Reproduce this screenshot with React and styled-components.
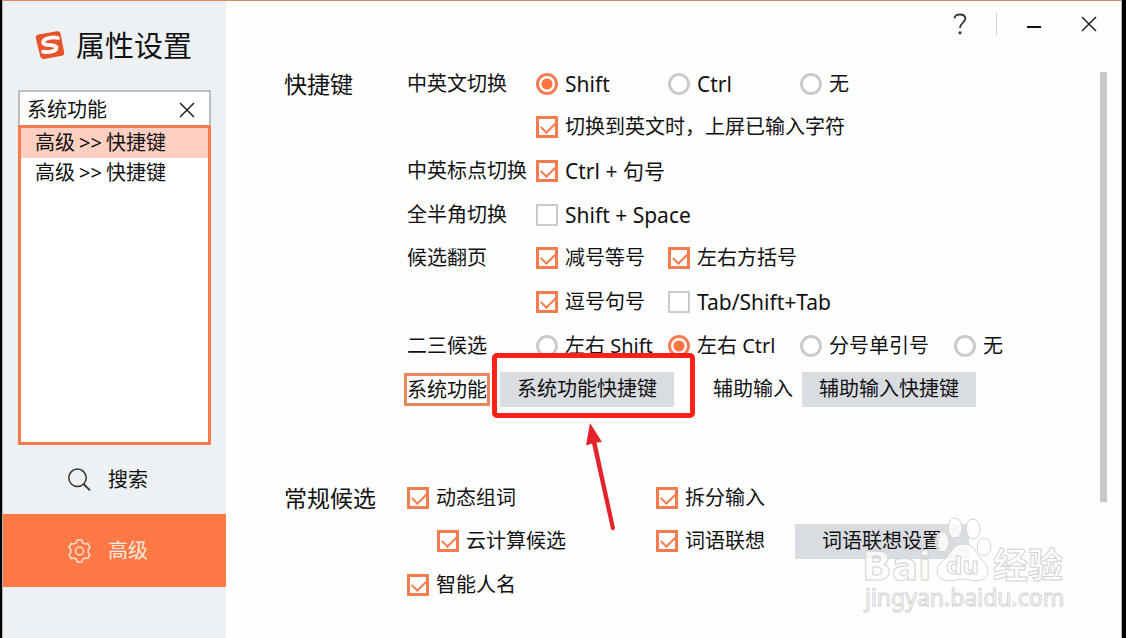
import React, { useState } from 'react';
import styled, { createGlobalStyle, css } from 'styled-components';

const orange = '#f67c4f';
const grey = '#c9cbcc';

const GlobalStyle = createGlobalStyle`
  * {
    box-sizing: border-box;
  }

  body {
    margin: 0;
    background: #000;
    color: #111;
    font-family: "Noto Sans", "Noto Sans CJK SC", sans-serif;
    font-size: 20px;
    line-height: 30px;
  }

  button,
  input {
    font: inherit;
    color: inherit;
  }
`;

const Window = styled.div`
  position: relative;
  display: flex;
  min-height: 100vh;
  margin: 0 4px 0 2px;
  border: 1px solid #b3b3b3;
  border-top: 1px solid #e08a68;
  border-bottom: 0;
  background: #fefefe;
  overflow: hidden;
`;

const Sidebar = styled.aside`
  flex: none;
  display: flex;
  flex-direction: column;
  width: 223px;
  background: #edf1f4;
`;

const Brand = styled.header`
  display: flex;
  align-items: center;
  gap: 10px;
  height: 89px;
  padding-left: 32px;
`;

const BrandTitle = styled.h1`
  margin: 0;
  font-size: 29px;
  font-weight: 400;
  line-height: 40px;
`;

const SearchBox = styled.div`
  display: flex;
  align-items: center;
  height: 35px;
  margin: 0 15px;
  padding: 2px 14px 0 7px;
  border: 2px solid #b9bfc3;
  border-bottom: 0;
  background: #fff;
`;

const SearchInput = styled.input`
  flex: 1;
  width: 100%;
  min-width: 0;
  padding: 0;
  border: 0;
  outline: 0;
  background: transparent;
`;

const IconButton = styled.button`
  display: flex;
  padding: 0;
  border: 0;
  background: none;
  cursor: pointer;
`;

const ResultList = styled.ul`
  height: 320px;
  margin: 0 15px;
  padding: 0;
  border: 3px solid ${orange};
  background: #fff;
  list-style: none;
`;

const Result = styled.li`
  padding-left: 14px;
  background: ${props => (props.$active ? '#ffd0c1' : 'transparent')};
`;

const Arrows = styled.span`
  padding: 0 4px;
`;

const Nav = styled.nav`
  display: flex;
  flex-direction: column;
`;

const NavItem = styled.a`
  display: flex;
  align-items: center;
  gap: 17px;
  height: ${props => (props.$active ? '73px' : '69px')};
  padding-left: 65px;
  color: ${props => (props.$active ? '#ffe9df' : '#111')};
  background: ${props => (props.$active ? '#ff7845' : 'transparent')};
  text-decoration: none;
`;

const Main = styled.main`
  flex: 1;
  display: flex;
  flex-direction: column;
  min-width: 0;
`;

const TitleBar = styled.div`
  display: flex;
  align-items: center;
  justify-content: flex-end;
  height: 45px;
  padding-right: 24px;
`;

const Divider = styled.span`
  width: 1px;
  height: 22px;
  margin: 0 29px;
  background: #ccc;
`;

const WindowButtons = styled.div`
  display: flex;
  gap: 39px;
`;

const Body = styled.div`
  flex: 1;
  display: flex;
  padding-top: 16px;
`;

const Sections = styled.div`
  flex: 1;
  display: flex;
  flex-direction: column;
  gap: 65px;
  min-width: 0;
  padding-left: 58px;
  white-space: nowrap;
`;

const ScrollTrack = styled.div`
  flex: none;
  width: 21px;
  padding-top: 10px;
`;

const ScrollThumb = styled.div`
  width: 7px;
  height: 76%;
  background: #c8c8c8;
`;

const Section = styled.section`
  display: grid;
  grid-template-columns: 123px 1fr;
`;

const SectionTitle = styled.h2`
  margin: 0;
  font-size: 23px;
  font-weight: 400;
  line-height: 44px;
`;

const Rows = styled.div`
  display: grid;
  grid-auto-rows: 1fr;
  min-height: ${props => props.$height};
`;

const Row = styled.div`
  display: grid;
  grid-template-columns: 129px 1fr;
  align-items: center;
`;

const RowLabel = styled.span`
  grid-column: 1;
`;

const Options = styled.div`
  grid-column: 2;
  display: grid;
  grid-template-columns: 132px 132px 154px auto;
`;

const Candidates = styled.div`
  display: grid;
  grid-template-columns: 249px 139px auto;
  align-items: center;
`;

const OptionLabel = styled.label`
  display: flex;
  align-items: center;
  gap: 7px;
  cursor: pointer;
  ${props => props.$wide && css`grid-column: 1 / -1;`}
  ${props => props.$indent && css`padding-left: 30px;`}
  ${props => props.$latin && css`font-size: 21px;`}
`;

const Check = styled.input`
  position: relative;
  appearance: none;
  flex: none;
  width: 22px;
  height: 22px;
  margin: 0;
  border: 2px solid ${grey};
  background: #fff;

  &:checked {
    border: 3px solid ${orange};
  }

  &:checked::after {
    content: '';
    position: absolute;
    left: 2px;
    top: 2px;
    width: 13px;
    height: 7px;
    border: solid ${orange};
    border-width: 0 0 2px 2px;
    transform: rotate(-45deg);
  }
`;

const Radio = styled.input`
  appearance: none;
  flex: none;
  width: 22px;
  height: 22px;
  margin: 0;
  border: 3px solid ${grey};
  border-radius: 50%;
  background: #fff;

  &:checked {
    border-color: ${orange};
    background: radial-gradient(circle, #ff7440 5px, #fff 6px);
  }
`;

const ShortcutRow = styled.div`
  display: flex;
  align-items: center;
`;

const FoundLabel = styled.span`
  margin: 0 10px 0 -3px;
  border: 3px solid #e98660;
  line-height: 27px;
`;

const PlainLabel = styled.span`
  margin: 0 9px 0 39px;
`;

const SettingButton = styled.button`
  width: 174px;
  height: 35px;
  padding: 0;
  border: 0;
  background: #d9dce1;
  cursor: pointer;
`;

const Marked = styled.div`
  position: relative;
  display: flex;
`;

const Frame = styled.span`
  position: absolute;
  inset: -19px -21px -11px -8px;
  border: 5px solid #ff2017;
  border-radius: 5px;
  pointer-events: none;
`;

const Pointer = styled.svg`
  position: absolute;
  left: 84px;
  top: 50px;
  pointer-events: none;
`;

const Watermark = styled.svg`
  position: absolute;
  right: 50px;
  bottom: 20px;
  pointer-events: none;
`;

const Logo = () => (
  <svg width="31" height="31" viewBox="0 0 31 31" aria-hidden="true">
    <path
      d="M3.500 4.500 22 1.300q3-.4 3.600 2.400l3.500 18.500q.4 3-2.400 3.600L9.300 29q-3.200.5-4-2.400L.8 8.200q-.5-3 2.700-3.700Z"
      fill="#e8532c"
    />
    <path
      d="M23 8C18 6.600 8 8 8.200 12.400c.2 4.200 13.300 1.200 13.200 5.500-.1 4-9 4.800-13.300 3.700"
      fill="none"
      stroke="#fff"
      strokeWidth="3.800"
      strokeLinecap="round"
    />
  </svg>
);

const CrossIcon = () => (
  <svg width="16" height="16" viewBox="0 0 16 16" aria-hidden="true">
    <path d="M1 1 15 15M15 1 1 15" stroke="#222" strokeWidth="1.500" />
  </svg>
);

const MinusIcon = () => (
  <svg width="16" height="16" viewBox="0 0 16 16" aria-hidden="true">
    <path d="M1 11H15" stroke="#111" strokeWidth="2" />
  </svg>
);

const HelpIcon = () => (
  <svg width="14" height="22" viewBox="0 0 14 22" aria-hidden="true">
    <path
      d="M1.500 5.500C1.500 3 3.700 1.500 6.800 1.500S12.300 3 12.300 5.500C12.300 9.500 7 9.800 7 15"
      fill="none"
      stroke="#333"
      strokeWidth="1.800"
    />
    <path d="M5.600 18.500H8.400V21.200H5.600Z" fill="#333" />
  </svg>
);

const SearchIcon = () => (
  <svg width="23" height="23" viewBox="0 0 23 23" aria-hidden="true">
    <circle cx="9.500" cy="9.800" r="8.700" fill="none" stroke="#333" strokeWidth="1.500" />
    <path d="M15.600 16 22 22.300" stroke="#333" strokeWidth="1.800" />
  </svg>
);

const GearIcon = () => (
  <svg width="23" height="24" viewBox="0 0 23 24" aria-hidden="true">
    <g fill="none" stroke="#ffe0d2" strokeWidth="1.500" strokeLinejoin="round">
      <path d="M9.300 1H13.700L14.500 3.500 17.300 5.100 19.800 4.500 22 8.300 20.300 10.200V13.800L22 15.700 19.800 19.500 17.300 18.900 14.500 20.500 13.700 23H9.300L8.500 20.500 5.700 18.900 3.200 19.500 1 15.700 2.700 13.800V10.200L1 8.300 3.200 4.500 5.700 5.100 8.500 3.500Z" />
      <circle cx="11.500" cy="12" r="4" />
    </g>
  </svg>
);

const Option = ({ type, label, checked, name, wide, indent, latin }) => (
  <OptionLabel $wide={wide} $indent={indent} $latin={latin}>
    {type === 'radio' ? (
      <Radio type="radio" name={name} defaultChecked={checked} />
    ) : (
      <Check type="checkbox" defaultChecked={checked} />
    )}
    {label}
  </OptionLabel>
);

const shortcutRows = [
  {
    label: '中英文切换',
    name: 'language',
    type: 'radio',
    options: [
      { label: 'Shift', checked: true, latin: true },
      { label: 'Ctrl', latin: true },
      { label: '无' },
    ],
  },
  { options: [{ label: '切换到英文时，上屏已输入字符', checked: true, wide: true }] },
  { label: '中英标点切换', options: [{ label: 'Ctrl + 句号', checked: true, wide: true, latin: true }] },
  { label: '全半角切换', options: [{ label: 'Shift + Space', wide: true, latin: true }] },
  {
    label: '候选翻页',
    options: [{ label: '减号等号', checked: true }, { label: '左右方括号', checked: true }],
  },
  { options: [{ label: '逗号句号', checked: true }, { label: 'Tab/Shift+Tab', latin: true }] },
  {
    label: '二三候选',
    name: 'candidate',
    type: 'radio',
    options: [
      { label: '左右 Shift' },
      { label: '左右 Ctrl', checked: true },
      { label: '分号单引号' },
      { label: '无' },
    ],
  },
];

const App = () => {
  const [query, setQuery] = useState('系统功能');

  return (
    <>
      <GlobalStyle />
      <Window>
        <Sidebar>
          <Brand>
            <Logo />
            <BrandTitle>属性设置</BrandTitle>
          </Brand>
          <SearchBox>
            <SearchInput
              type="text"
              aria-label="搜索"
              value={query}
              onChange={e => setQuery(e.target.value)}
            />
            <IconButton type="button" aria-label="清除" onClick={() => setQuery('')}>
              <CrossIcon />
            </IconButton>
          </SearchBox>
          <ResultList>
            <Result $active>
              高级<Arrows>&gt;&gt;</Arrows>快捷键
            </Result>
            <Result>
              高级<Arrows>&gt;&gt;</Arrows>快捷键
            </Result>
          </ResultList>
          <Nav>
            <NavItem href="#search">
              <SearchIcon />
              搜索
            </NavItem>
            <NavItem href="#advanced" $active>
              <GearIcon />
              高级
            </NavItem>
          </Nav>
        </Sidebar>

        <Main>
          <TitleBar>
            <IconButton type="button" aria-label="帮助">
              <HelpIcon />
            </IconButton>
            <Divider />
            <WindowButtons>
              <IconButton type="button" aria-label="最小化">
                <MinusIcon />
              </IconButton>
              <IconButton type="button" aria-label="关闭">
                <CrossIcon />
              </IconButton>
            </WindowButtons>
          </TitleBar>

          <Body>
            <Sections>
              <Section>
                <SectionTitle>快捷键</SectionTitle>
                <Rows $height="349px">
                  {shortcutRows.map((row, i) => (
                    <Row key={i}>
                      {row.label && <RowLabel>{row.label}</RowLabel>}
                      <Options>
                        {row.options.map(option => (
                          <Option key={option.label} type={row.type} name={row.name} {...option} />
                        ))}
                      </Options>
                    </Row>
                  ))}
                  <ShortcutRow>
                    <FoundLabel>系统功能</FoundLabel>
                    <Marked>
                      <SettingButton type="button">系统功能快捷键</SettingButton>
                      <Frame />
                      <Pointer width="34" height="112" viewBox="0 0 34 112" aria-hidden="true">
                        <path
                          d="M6 1 18 20 12.500 20.500 31 106Q30 110 27 107L8 21.500 2 23.500Z"
                          fill="#e3222b"
                        />
                      </Pointer>
                    </Marked>
                    <PlainLabel>辅助输入</PlainLabel>
                    <SettingButton type="button">辅助输入快捷键</SettingButton>
                  </ShortcutRow>
                </Rows>
              </Section>

              <Section>
                <SectionTitle>常规候选</SectionTitle>
                <Rows $height="131px">
                  <Candidates>
                    <Option label="动态组词" checked />
                    <Option label="拆分输入" checked />
                  </Candidates>
                  <Candidates>
                    <Option label="云计算候选" checked indent />
                    <Option label="词语联想" checked />
                    <SettingButton type="button">词语联想设置</SettingButton>
                  </Candidates>
                  <Candidates>
                    <Option label="智能人名" checked />
                  </Candidates>
                </Rows>
              </Section>
            </Sections>
            <ScrollTrack>
              <ScrollThumb />
            </ScrollTrack>
          </Body>
        </Main>

        <Watermark width="210" height="102" viewBox="0 0 210 102">
          <g
            fill="#fff"
            fillOpacity="0.8"
            stroke="#d3d3d3"
            strokeWidth="1"
            fontFamily='"DejaVu Sans", "Noto Sans CJK SC", sans-serif'
          >
            <text x="1" y="64" fontSize="39" fontWeight="700">Bai</text>
            <ellipse cx="81" cy="26" rx="7" ry="10" />
            <ellipse cx="94" cy="12" rx="7" ry="10" />
            <ellipse cx="112" cy="13" rx="7" ry="10" />
            <ellipse cx="123" cy="31" rx="7" ry="9" />
            <path d="M102 28C93 28 91 35 86 41 81 46 76 49 76 56 78 67 88 65 102 63 116 65 125 67 127 56 128 49 121 45 117 39 113 32 110 28 102 28Z" />
            <text x="85" y="58" fontSize="23" fontWeight="700">du</text>
            <text x="132" y="62" fontSize="35" fontWeight="700">经验</text>
            <text x="4" y="90" fontSize="23" fontFamily='"Noto Sans", sans-serif'>
              jingyan.baidu.com
            </text>
          </g>
        </Watermark>
      </Window>
    </>
  );
};

export default App;
